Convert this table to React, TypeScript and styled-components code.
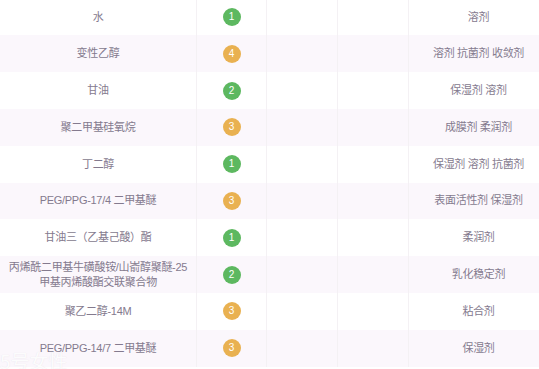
import styled, { createGlobalStyle } from "styled-components";

const GlobalStyle = createGlobalStyle`
    html, body {
        margin: 0;
        padding: 0;
        background: #ffffff;
        overflow: hidden;
    }
`;

type Level = 1 | 2 | 3 | 4;

const rows: { name: string[]; level: Level; use: string }[] = [
    { name: ["水"], level: 1, use: "溶剂" },
    { name: ["变性乙醇"], level: 4, use: "溶剂 抗菌剂 收敛剂" },
    { name: ["甘油"], level: 2, use: "保湿剂 溶剂" },
    { name: ["聚二甲基硅氧烷"], level: 3, use: "成膜剂 柔润剂" },
    { name: ["丁二醇"], level: 1, use: "保湿剂 溶剂 抗菌剂" },
    { name: ["PEG/PPG-17/4 二甲基醚"], level: 3, use: "表面活性剂 保湿剂" },
    { name: ["甘油三（乙基己酸）酯"], level: 1, use: "柔润剂" },
    { name: ["丙烯酰二甲基牛磺酸铵/山嵛醇聚醚-25", "甲基丙烯酸酯交联聚合物"], level: 2, use: "乳化稳定剂" },
    { name: ["聚乙二醇-14M"], level: 3, use: "粘合剂" },
    { name: ["PEG/PPG-14/7 二甲基醚"], level: 3, use: "保湿剂" },
];

export default function App() {
    return (
        <>
            <GlobalStyle />
            <Styled.Root>
                <Styled.Table>
                    {rows.map((row, i) => (
                        <Styled.Row key={i} striped={i % 2 === 1}>
                            <Styled.Cell>
                                <Styled.Name>
                                    {row.name.map((line) => (
                                        <span key={line}>{line}</span>
                                    ))}
                                </Styled.Name>
                            </Styled.Cell>
                            <Styled.Cell>
                                <Badge safe={row.level <= 2}>{row.level}</Badge>
                            </Styled.Cell>
                            <Styled.Cell />
                            <Styled.Cell />
                            <Styled.Cell>
                                <Styled.Name>{row.use}</Styled.Name>
                            </Styled.Cell>
                        </Styled.Row>
                    ))}
                </Styled.Table>
                <Watermark>5号女性</Watermark>
            </Styled.Root>
        </>
    );
}

const Styled = {
    Root: styled.div`
        position: relative;
        width: 539px;
        height: 369px;
        overflow: hidden;
        font-family: "Liberation Sans", "Noto Sans CJK SC", sans-serif;
    `,
    Table: styled.div`
        display: flex;
        flex-direction: column;
        width: 548px;
        margin-top: -1.4px;
    `,
    Row: styled.div<{ striped: boolean }>`
        display: grid;
        grid-template-columns: 196px 70px 71px 71px 140px;
        height: 36.8px;
        background: ${(p) => (p.striped ? "#fbf7fc" : "#ffffff")};
    `,
    Cell: styled.div`
        display: flex;
        align-items: center;
        justify-content: center;
        text-align: center;
        & + & {
            border-left: 1px solid #f4f1f4;
        }
    `,
    Name: styled.div`
        display: flex;
        flex-direction: column;
        align-items: center;
        font-size: 11px;
        line-height: 15px;
        color: #847a8e;
        white-space: nowrap;
        letter-spacing: -0.3px;
    `,
};

const Badge = styled.span<{ safe: boolean }>`
    display: inline-flex;
    align-items: center;
    justify-content: center;
    width: 18px;
    height: 18px;
    border-radius: 50%;
    background: ${(p) => (p.safe ? "#5db860" : "#e9b151")};
    color: #ffffff;
    font-size: 10px;
    line-height: 1;
`;

const Watermark = styled.div`
    position: absolute;
    left: 0;
    top: 350px;
    font-size: 19px;
    line-height: 22px;
    color: rgba(255, 255, 255, 0.92);
    text-shadow: 0 0 1px rgba(180, 170, 190, 0.3);
    font-family: "Noto Sans CJK SC", sans-serif;
`;
